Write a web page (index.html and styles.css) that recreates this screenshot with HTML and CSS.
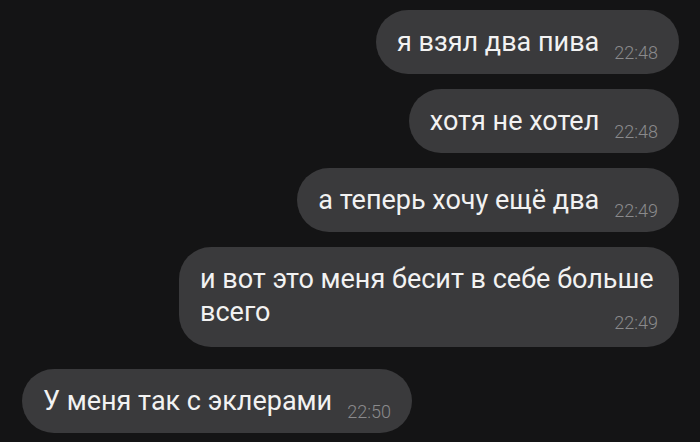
FILE: index.html
```html
<!DOCTYPE html>
<html lang="ru">
<head>
  <meta charset="UTF-8" />
  <title>Чат</title>
  <link rel="stylesheet" href="styles.css">
</head>
<body>
  <div class="chat">
    <div class="bubble out"><span class="time">22:48</span>я взял два пива</div>
    <div class="bubble out"><span class="time">22:48</span>хотя не хотел</div>
    <div class="bubble out"><span class="time">22:49</span>а теперь хочу ещё два</div>
    <div class="bubble out long">и вот это меня бесит в себе больше всего<span class="time">22:49</span></div>
    <div class="bubble in"><span class="time">22:50</span>У меня так с эклерами</div>
  </div>
</body>
</html>
```

FILE: styles.css
```css
body {
  margin: 0;
  background: #141415;
  font-family: Roboto, "Noto Sans", sans-serif;
  color: #f2f2f2;
}

.chat {
  display: flex;
  flex-direction: column;
  gap: 15px;
  padding: 10px 21px 0 22px;
}

.bubble {
  background: #3a3a3c;
  border-radius: 32px;
  padding: 16px 21px 15px;
  font-size: 27px;
  line-height: 33px;
  max-width: 458px;
}

.long {
  padding-bottom: 18px;
}

.out {
  align-self: flex-end;
}

.in {
  align-self: flex-start;
  margin-top: 7px;
}

.time {
  float: right;
  margin: 19px 0 -10px 15px;
  font-size: 18px;
  font-weight: 300;
  line-height: 16px;
  color: #8a8a8c;
}
```
